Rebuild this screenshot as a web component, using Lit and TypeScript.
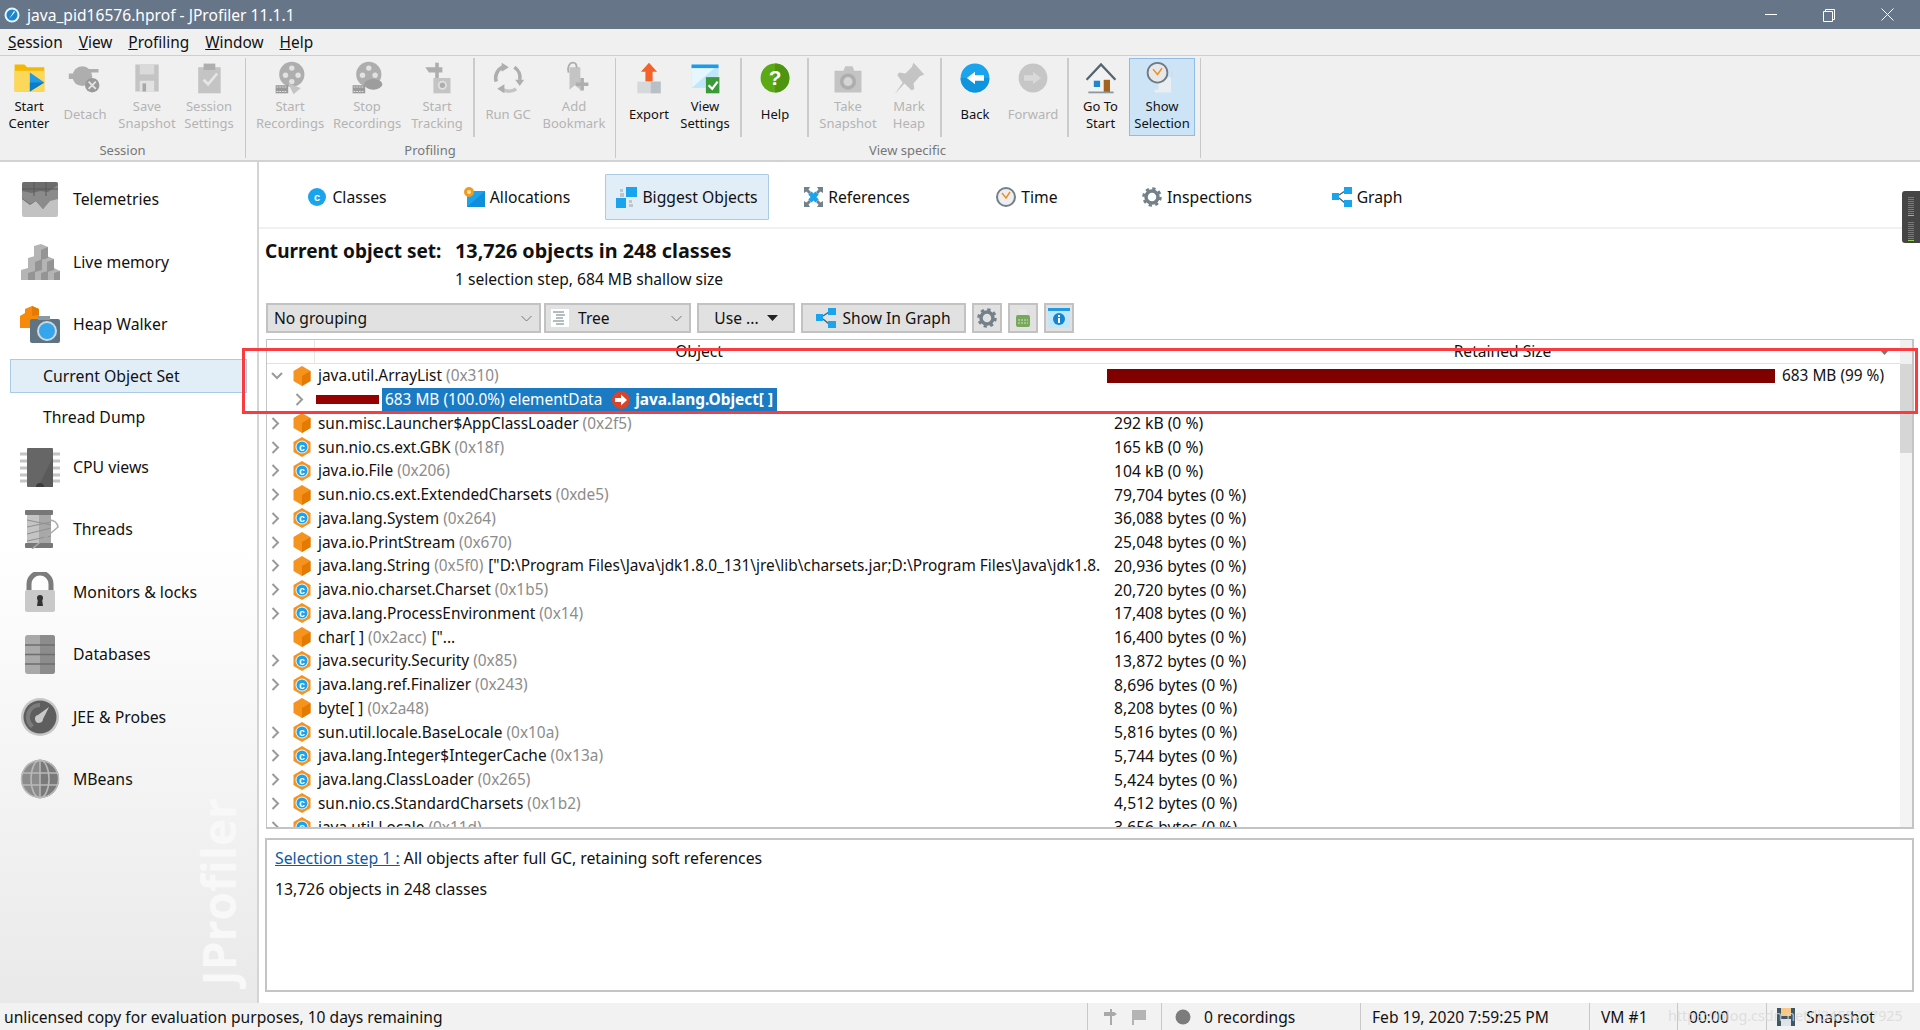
import { LitElement, html, css, svg } from 'lit';
import { customElement } from 'lit/decorators.js';

// Toolbar icons, all on a 40x40 box
const G1 = '#c4c4c4';
const G2 = '#aeaeae';
const toolIcons: Record<string, unknown> = {
  start: svg`<path d="M4 5h11l3 3h19v27H4z" fill="#f5b800"/><path d="M4 12h33v23H4z" fill="#fbd75a"/><path d="M21 14l16 11-16 10z" fill="#1f9ae8"/><path d="M21 25h16l-16 10z" fill="#0d7cc6"/>`,
  detach: svg`<circle cx="17" cy="18" r="11" fill="${G2}"/><path d="M2 15h6v6H2zM24 10h11v4H24zM24 21h6v4h-6z" fill="${G2}"/><circle cx="28" cy="28" r="8" fill="#9a9a9a"/><path d="M24 24l8 8M32 24l-8 8" stroke="#e4e4e4" stroke-width="2"/>`,
  save: svg`<path d="M7 5h26v30H7z" fill="${G1}"/><path d="M12 5h16v11H12z" fill="#dadada"/><path d="M12 23h16v12H12z" fill="#e2e2e2"/><path d="M15 26h4v9h-4z" fill="#a8a8a8"/>`,
  settings: svg`<path d="M8 8h25v29H8z" fill="${G1}"/><path d="M14 4h13v7H14z" fill="${G2}"/><path d="M14 22l5 5 10-12" stroke="#e6e6e6" stroke-width="3" fill="none"/>`,
  startRec: svg`<circle cx="22" cy="16" r="14" fill="${G2}"/><circle cx="22" cy="9" r="3" fill="#e2e2e2"/><circle cx="15" cy="17" r="3" fill="#e2e2e2"/><circle cx="29" cy="17" r="3" fill="#e2e2e2"/><circle cx="22" cy="24" r="3" fill="#e2e2e2"/><path d="M4 28h14v9H4z" fill="#9a9a9a"/><path d="M5 30h12M5 35h12" stroke="#e6e6e6" stroke-dasharray="2 1"/><path d="M18 26l14 5-8 7z" fill="${G1}"/>`,
  stopRec: svg`<circle cx="22" cy="16" r="14" fill="${G2}"/><circle cx="22" cy="9" r="3" fill="#e2e2e2"/><circle cx="15" cy="17" r="3" fill="#e2e2e2"/><circle cx="29" cy="17" r="3" fill="#e2e2e2"/><path d="M4 28h14v9H4z" fill="#9a9a9a"/><path d="M5 30h12M5 35h12" stroke="#e6e6e6" stroke-dasharray="2 1"/><ellipse cx="27" cy="27" rx="10" ry="6" fill="#9d9d9d"/>`,
  tracking: svg`<path d="M18 3h4v20h-4z" fill="${G2}"/><path d="M7 8h19v6H11z" fill="${G2}"/><path d="M16 20h19v17H16z" fill="${G1}"/><circle cx="26" cy="28" r="5" fill="#e0e0e0"/><circle cx="26" cy="28" r="3" fill="${G2}"/>`,
  gc: svg`<path d="M27 8a13 13 0 0 1 6 14" stroke="${G2}" stroke-width="4" fill="none"/><path d="M29 32a13 13 0 0 1-16 0" stroke="${G1}" stroke-width="4" fill="none"/><path d="M7 24a13 13 0 0 1 7-16" stroke="${G2}" stroke-width="4" fill="none"/><path d="M13 3l8 5-8 5z" fill="${G2}"/><path d="M28 22h10l-5 7zM16 37l-8-5 8-5z" fill="${G2}"/>`,
  bookmark: svg`<path d="M15 10h12v25l-6-5-6 5z" fill="${G1}" transform="translate(0 -2)"/><path d="M14 14C12 8 15 3 19 3c3 0 4 3 4 6" stroke="${G2}" stroke-width="2" fill="none"/><path d="M26 27h5v-5h4v5h5v4h-5v5h-4v-5h-5z" fill="${G2}" transform="translate(-4 -2)"/>`,
  exportUp: svg`<path d="M20 3l9 10h-5v11h-8V13h-5z" fill="#f4622a"/><path d="M7 24h26v13H7z" fill="#d5d9dc"/><path d="M22 24h11v13H22z" fill="#b8c0c6"/>`,
  viewSettings: svg`<path d="M5 5h30v26H5z" fill="#bfe6fb"/><path d="M5 5h30l-30 26z" fill="#e7f6fd"/><path d="M5 5h30v4H5z" fill="#1f9ae8"/><path d="M21 19h15v18H21z" fill="#3a9a3a"/><path d="M24 28l4 4 6-8" stroke="#fff" stroke-width="2.5" fill="none"/>`,
  help: svg`<circle cx="20" cy="20" r="16" fill="#5aa915"/><path d="M20 4a16 16 0 0 1 0 32z" fill="#4d9410"/><text x="20" y="28" font-family="Liberation Sans" font-weight="700" font-size="23" text-anchor="middle" fill="#fff">?</text>`,
  camera: svg`<path d="M5 12h10l2-5h8l2 5h8v24H5z" fill="${G1}"/><circle cx="20" cy="24" r="9" fill="${G2}"/><circle cx="20" cy="24" r="5" fill="#d5d5d5"/>`,
  pin: svg`<path d="M25 3l12 13-5 2-7 8 1 6-3 2-8-8-11 12 9-13-6-8 2-3 7 1 7-7z" fill="${G1}"/>`,
  back: svg`<circle cx="20" cy="20" r="16" fill="#1ba4ee"/><path d="M4 20a16 16 0 0 0 32 0z" fill="#0f94dd"/><path d="M11 20l9-7v4h10v6H20v4z" fill="#fff"/>`,
  forward: svg`<circle cx="20" cy="20" r="16" fill="#c6c6c6"/><path d="M29 20l-9-7v4H10v6h10v4z" fill="#d9d9d9"/>`,
  house: svg`<path d="M9 20L20 8l11 12v16H9z" fill="#f2f2f2"/><path d="M4 22L20 5l16 17" stroke="#56646e" stroke-width="2.5" fill="none"/><path d="M12 23h7v7h-7z" fill="#1f86d4"/><path d="M23 22h7v14h-7z" fill="#a5611f"/><path d="M6 35h28v2H6z" fill="#8b979f"/>`,
  showSel: svg`<path d="M16 18h14v17H12v-3h4z" fill="#e8eef2"/><circle cx="15" cy="13" r="11" fill="#e8e8e8" stroke="#6f7a82" stroke-width="2"/><path d="M10 9l5 6 5-7" stroke="#f28c1e" stroke-width="1.6" fill="none"/><path d="M30 12l2 1v5h-2z" fill="#d4dde4"/>`,
};

// Sidebar icons, all on a 40x40 box
const navIcons: Record<string, unknown> = {
  telemetries: svg`<rect x="2" y="3" width="36" height="35" rx="2" fill="#c2c2c2"/><path d="M2 5a2 2 0 0 1 2-2h32a2 2 0 0 1 2 2v14l-8 2-7 9-7-8-6 4-8-6z" fill="#6d6d6d"/><path d="M2 12l10 2 8-2 8 1 10-7v14l-8 2-7 8-7-8-6 3-8-6z" fill="#8b8b8b"/><path d="M2 10h36M14 3v14M26 3v14" stroke="#5a5a5a" stroke-width="1"/>`,
  memory: svg`<g fill="#b4b4b4"><path d="M14 4l7-2 7 3v11l-7 2-7-3z"/><path d="M8 16l7-2 7 3v11l-7 2-7-3z"/><path d="M20 16l7-2 7 3v11l-7 2-7-3z"/><path d="M1 28l7-2 7 3v9H1z"/><path d="M14 28l7-2 7 3v9H14z"/><path d="M27 28l7-2 6 3v9H27z"/></g><path d="M21 18V8l7-3v11zM15 30V20l7-3v11zM27 30V20l7-3v11zM8 38v-7l7-2v9zM21 38v-7l7-2v9zM34 38v-7l6-2v9z" fill="#949494"/>`,
  heap: svg`<path d="M12 2l7 3v7l7 3v9H0V12l5-3V5z" fill="#f58a0b"/><path d="M12 2v10l7-1V5z" fill="#e57a00"/><rect x="10" y="15" width="30" height="24" rx="2" fill="#5f7482"/><path d="M18 12h12v4H18z" fill="#8a9aa5"/><circle cx="27" cy="27" r="10" fill="#cfd8de"/><circle cx="27" cy="27" r="8" fill="#35a6ee"/>`,
  cpu: svg`<path d="M0 7h8M0 14h8M0 21h8M0 28h8M0 34h8M32 7h8M32 14h8M32 21h8M32 28h8M32 34h8" stroke="#c4c4c4" stroke-width="3"/><rect x="7" y="1" width="26" height="39" rx="1" fill="#666"/><path d="M33 1v39H18L33 10z" fill="#555" opacity=".7"/><circle cx="20" cy="40" r="4" fill="#3c3c3c"/>`,
  threads: svg`<rect x="5" y="1" width="28" height="5" rx="1" fill="#777"/><rect x="5" y="34" width="28" height="5" rx="1" fill="#777"/><rect x="7" y="6" width="24" height="28" fill="#c4c4c4"/><rect x="19" y="6" width="12" height="28" fill="#a8a8a8"/><path d="M7 11l24 5M7 18l24-5M7 25l24-6M7 32l24-5" stroke="#8f8f8f"/><path d="M12 40L38 18c-1-5-5-7-9-7" stroke="#aaa" stroke-width="1.5" fill="none"/>`,
  lock: svg`<path d="M9 20V12a11 11 0 0 1 22 0v8" stroke="#7c7c7c" stroke-width="5" fill="none"/><rect x="5" y="18" width="30" height="22" rx="2" fill="#c9c9c9"/><circle cx="20" cy="26" r="3" fill="#333"/><path d="M18 27h4l1 7h-6z" fill="#333"/>`,
  db: svg`<rect x="5" y="1" width="30" height="39" rx="3" fill="#a9a9a9"/><path d="M20 1h12a3 3 0 0 1 3 3v33a3 3 0 0 1-3 3H20z" fill="#8c8c8c"/><path d="M5 11h30M5 20.500h30M5 30h30" stroke="#6d6d6d" stroke-width="1.500"/>`,
  jee: svg`<circle cx="20" cy="20" r="19" fill="#c7c7c7"/><circle cx="20" cy="20" r="16.500" fill="#5e5e5e"/><path d="M20 6a14 14 0 0 0-14 14c0 5 2 9 5 11l3-3a10 10 0 0 1 6-18z" fill="#7c7c7c"/><path d="M29 10l-6 12a4 4 0 1 1-5-4z" fill="#c9c9c9"/>`,
  mbeans: svg`<circle cx="20" cy="20" r="19" fill="#8b8b8b"/><path d="M20 1a19 19 0 0 1 0 38z" fill="#7a7a7a"/><ellipse cx="20" cy="20" rx="9" ry="19" fill="none" stroke="#b9b9b9" stroke-width="1.500"/><path d="M20 1v38M2 14h36M2 26h36" stroke="#b9b9b9" stroke-width="1.500"/><circle cx="20" cy="20" r="18.500" fill="none" stroke="#b9b9b9" stroke-width="1.500"/>`,
};

const tabIcons: Record<string, unknown> = {
  classes: html`<svg width="20" height="20" viewBox="0 0 20 20"><circle cx="10" cy="10" r="9" fill="#1ba4ee"/><text x="10" y="14" font-family="Liberation Sans" font-weight="700" font-size="11" text-anchor="middle" fill="#fff">c</text></svg>`,
  alloc: html`<svg width="21" height="20" viewBox="0 0 21 20"><path d="M3 4h18v16H3z" fill="#1ba4ee"/><path d="M21 4v16H3z" fill="#0f8edb"/><circle cx="5" cy="5" r="5" fill="#f39a1e"/><circle cx="5" cy="5" r="2" fill="#fde4a8"/></svg>`,
  biggest: html`<svg width="21" height="21" viewBox="0 0 21 21"><path d="M0 11h10v10H0z" fill="#1ba4ee"/><path d="M10 0h11v10H10z" fill="#1ba4ee"/><path d="M4 2h3v3H4zM4 6h4v4H4zM13 13h3v3h-3zM13 17h4v3h-4z" fill="#bcc6cc"/></svg>`,
  refs: html`<svg width="19" height="20" viewBox="0 0 19 20"><path d="M6 6l7 8M13 6l-7 8" stroke="#1ba4ee" stroke-width="4.500"/><path d="M0 0h6L4.500 2.500 7 5 5 7 2.500 4.500 0 6zM19 0h-6l1.500 2.500L12 5l2 2 2.500-2.500L19 6zM0 20v-6l2.500 1.500L5 13l2 2-2.500 2.500L6 20zM19 20h-6l1.500-2.500L12 15l2-2 2.500 2.500L19 14z" fill="#72828d"/></svg>`,
  time: html`<svg width="20" height="20" viewBox="0 0 20 20"><circle cx="10" cy="10" r="9" fill="#eceeef" stroke="#738089" stroke-width="2"/><path d="M6 6l4 5 4-6" stroke="#f28c1e" stroke-width="1.400" fill="none"/></svg>`,
  gear: html`<svg width="20" height="20" viewBox="0 0 20 20"><circle cx="10" cy="10" r="6" fill="none" stroke="#738089" stroke-width="3.500"/><circle cx="10" cy="10" r="8.500" fill="none" stroke="#738089" stroke-width="2.500" stroke-dasharray="3.300 3.375"/></svg>`,
  graph: html`<svg width="20" height="20" viewBox="0 0 20 20"><path d="M7 8L13 4M7 11l6 5" stroke="#4f6270" stroke-width="1.500"/><path d="M0 6h7v7H0z" fill="#1ba4ee"/><path d="M12 0h8v7h-8z" fill="#1ba4ee"/><path d="M12 13h8v7h-8z" fill="#1ba4ee"/></svg>`,
};

const objectIcon = html`<svg class="node" width="18" height="20" viewBox="0 0 18 20"><path d="M9 0l8.500 5v10L9 20 .5 15V5z" fill="#f6921e"/><path d="M9 10l8.500-5v10L9 20z" fill="#e57a00"/></svg>`;
const classIcon = html`<svg class="node" width="18" height="20" viewBox="0 0 18 20"><path d="M9 0l8.500 5v10L9 20 .5 15V5z" fill="#f6921e"/><circle cx="9" cy="10" r="6.500" fill="#eaf6fd"/><circle cx="9" cy="10" r="5.500" fill="#1ba4ee"/><text x="9" y="13.500" font-family="Liberation Sans" font-weight="700" font-size="10.500" text-anchor="middle" fill="#fff">c</text></svg>`;
const chevronRight = html`<svg width="9" height="13" viewBox="0 0 9 13"><path d="M1.500 1l5.500 5.500L1.500 12" stroke="#9a9a9a" stroke-width="2" fill="none"/></svg>`;
const chevronDown = html`<svg width="12" height="8" viewBox="0 0 12 8"><path d="M1 1l5 5 5-5" stroke="#9a9a9a" stroke-width="2" fill="none"/></svg>`;
const comboArrow = html`<svg class="combo-arrow" width="11" height="7" viewBox="0 0 11 7"><path d="M.5 1l5 5 5-5" stroke="#777" stroke-width="1" fill="none"/></svg>`;

type Tool = { icon: string; lines: string[]; w: number; on?: boolean; active?: boolean; sep?: string };
const toolGroups: { label: string; cls: string; tools: Tool[] }[] = [
  {
    label: 'Session', cls: 'g1', tools: [
      { icon: 'start', lines: ['Start', 'Center'], w: 58, on: true },
      { icon: 'detach', lines: ['Detach'], w: 54 },
      { icon: 'save', lines: ['Save', 'Snapshot'], w: 70 },
      { icon: 'settings', lines: ['Session', 'Settings'], w: 54 },
    ],
  },
  {
    label: 'Profiling', cls: 'g2', tools: [
      { icon: 'startRec', lines: ['Start', 'Recordings'], w: 78 },
      { icon: 'stopRec', lines: ['Stop', 'Recordings'], w: 76 },
      { icon: 'tracking', lines: ['Start', 'Tracking'], w: 64, sep: 's1' },
      { icon: 'gc', lines: ['Run GC'], w: 62 },
      { icon: 'bookmark', lines: ['Add', 'Bookmark'], w: 70 },
    ],
  },
  {
    label: 'View specific', cls: 'g3', tools: [
      { icon: 'exportUp', lines: ['Export'], w: 56, on: true },
      { icon: 'viewSettings', lines: ['View', 'Settings'], w: 56, on: true, sep: 's2' },
      { icon: 'help', lines: ['Help'], w: 56, on: true, sep: 's3' },
      { icon: 'camera', lines: ['Take', 'Snapshot'], w: 66 },
      { icon: 'pin', lines: ['Mark', 'Heap'], w: 56, sep: 's4' },
      { icon: 'back', lines: ['Back'], w: 64, on: true },
      { icon: 'forward', lines: ['Forward'], w: 52, sep: 's5' },
      { icon: 'house', lines: ['Go To', 'Start'], w: 57, on: true },
      { icon: 'showSel', lines: ['Show', 'Selection'], w: 66, on: true, active: true },
    ],
  },
];

const navItems = [
  { icon: 'telemetries', label: 'Telemetries' },
  { icon: 'memory', label: 'Live memory' },
  { icon: 'heap', label: 'Heap Walker', subs: true },
  { icon: 'cpu', label: 'CPU views' },
  { icon: 'threads', label: 'Threads' },
  { icon: 'lock', label: 'Monitors & locks' },
  { icon: 'db', label: 'Databases' },
  { icon: 'jee', label: 'JEE & Probes' },
  { icon: 'mbeans', label: 'MBeans' },
];

const tabs = [
  { icon: 'classes', label: 'Classes' },
  { icon: 'alloc', label: 'Allocations' },
  { icon: 'biggest', label: 'Biggest Objects', active: true },
  { icon: 'refs', label: 'References' },
  { icon: 'time', label: 'Time' },
  { icon: 'gear', label: 'Inspections' },
  { icon: 'graph', label: 'Graph' },
];

// kind: o = plain object icon, c = class icon. leaf rows have no chevron.
const rows: { kind: string; name: string; addr: string; extra?: string; size: string; leaf?: boolean }[] = [
  { kind: 'o', name: 'sun.misc.Launcher$AppClassLoader', addr: '(0x2f5)', size: '292 kB (0 %)' },
  { kind: 'c', name: 'sun.nio.cs.ext.GBK', addr: '(0x18f)', size: '165 kB (0 %)' },
  { kind: 'c', name: 'java.io.File', addr: '(0x206)', size: '104 kB (0 %)' },
  { kind: 'o', name: 'sun.nio.cs.ext.ExtendedCharsets', addr: '(0xde5)', size: '79,704 bytes (0 %)' },
  { kind: 'c', name: 'java.lang.System', addr: '(0x264)', size: '36,088 bytes (0 %)' },
  { kind: 'o', name: 'java.io.PrintStream', addr: '(0x670)', size: '25,048 bytes (0 %)' },
  { kind: 'o', name: 'java.lang.String', addr: '(0x5f0)', extra: '["D:\\Program Files\\Java\\jdk1.8.0_131\\jre\\lib\\charsets.jar;D:\\Program Files\\Java\\jdk1.8.', size: '20,936 bytes (0 %)' },
  { kind: 'c', name: 'java.nio.charset.Charset', addr: '(0x1b5)', size: '20,720 bytes (0 %)' },
  { kind: 'c', name: 'java.lang.ProcessEnvironment', addr: '(0x14)', size: '17,408 bytes (0 %)' },
  { kind: 'o', name: 'char[ ]', addr: '(0x2acc)', extra: '["...', size: '16,400 bytes (0 %)', leaf: true },
  { kind: 'c', name: 'java.security.Security', addr: '(0x85)', size: '13,872 bytes (0 %)' },
  { kind: 'c', name: 'java.lang.ref.Finalizer', addr: '(0x243)', size: '8,696 bytes (0 %)' },
  { kind: 'o', name: 'byte[ ]', addr: '(0x2a48)', size: '8,208 bytes (0 %)', leaf: true },
  { kind: 'c', name: 'sun.util.locale.BaseLocale', addr: '(0x10a)', size: '5,816 bytes (0 %)' },
  { kind: 'c', name: 'java.lang.Integer$IntegerCache', addr: '(0x13a)', size: '5,744 bytes (0 %)' },
  { kind: 'c', name: 'java.lang.ClassLoader', addr: '(0x265)', size: '5,424 bytes (0 %)' },
  { kind: 'c', name: 'sun.nio.cs.StandardCharsets', addr: '(0x1b2)', size: '4,512 bytes (0 %)' },
  { kind: 'c', name: 'java.util.Locale', addr: '(0x11d)', size: '3,656 bytes (0 %)' },
];

@customElement('app-root')
export class AppRoot extends LitElement {
  static override styles = css`
    :host {
      display: flex;
      flex-direction: column;
      position: relative;
      width: 1920px;
      height: 1030px;
      overflow: hidden;
      background: #fff;
      color: #111;
      font-family: 'Noto Sans', 'Open Sans', sans-serif;
      font-size: 15.6px;
    }
    svg { display: block; flex: none; }

    /* title bar */
    .titlebar {
      height: 29px;
      flex: none;
      display: flex;
      align-items: center;
      background: #677589;
      color: #fff;
      padding-left: 4px;
      gap: 7px;
    }
    .win-btns { margin-left: auto; display: flex; gap: 46px; padding-right: 26px; }

    /* menu */
    .menubar {
      height: 27px;
      flex: none;
      box-sizing: border-box;
      display: flex;
      align-items: center;
      background: #f0f0f0;
      border-bottom: 1px solid #cfcfcf;
      padding-left: 8px;
      gap: 16px;
      font-size: 15.4px;
    }

    /* toolbar */
    .toolbar {
      height: 106px;
      flex: none;
      box-sizing: border-box;
      display: flex;
      background: #f0f0f0;
      border-bottom: 2px solid #d2d2d2;
      padding-top: 2px;
    }
    .group {
      height: 100px;
      box-sizing: border-box;
      display: flex;
      flex-direction: column;
      border-right: 1px solid #c8c8c8;
    }
    .group.g1 { width: 246px; }
    .group.g2 { width: 370px; padding-left: 5px; }
    .group.g3 { width: 585px; padding-left: 5px; }
    .tools { display: flex; height: 78px; }
    .group-label { margin-top: 6px; height: 16px; line-height: 16px; text-align: center; font-size: 13px; color: #777; }
    .g2 .group-label, .g3 .group-label { margin-left: -6px; }
    .tool {
      flex: none;
      box-sizing: border-box;
      display: flex;
      flex-direction: column;
      align-items: center;
      font-size: 13px;
      line-height: 17px;
      color: #b4b4b4;
    }
    .tool.on { color: #111; }
    .tool.active { background: #cde4f7; border: 1px solid #8fbce4; }
    .tool-icon { height: 40px; display: flex; align-items: center; justify-content: center; }
    .tool-label { height: 33px; display: flex; flex-direction: column; align-items: center; justify-content: center; white-space: nowrap; }
    .tool.active .tool-icon { height: 39px; }
    .sep { flex: none; width: 2px; height: 79px; background: #cbcbcb; }
    .sep.s1 { margin: 0 2px 0 4px; }
    .sep.s2 { margin: 0 5px 0 7px; }
    .sep.s3 { margin: 0 6px 0 4px; }
    .sep.s4 { margin: 0 1px 0 3px; }
    .sep.s5 { margin: 0 3px 0 8px; }

    /* main */
    .main { flex: 1; min-height: 0; display: flex; }
    .sidebar {
      position: relative;
      width: 259px;
      flex: none;
      box-sizing: border-box;
      border-right: 2px solid #d4d4d4;
      background: linear-gradient(#fff 0%, #fff 45%, #e9e9e9 100%);
      padding-top: 6px;
      font-size: 15.8px;
    }
    .nav-item { height: 62.500px; display: flex; align-items: center; padding-left: 20px; gap: 13px; color: #111; }
    .sub-items { display: flex; flex-direction: column; gap: 7px; margin: 3px 0 2px; }
    .sub-item { height: 34px; box-sizing: border-box; display: flex; align-items: center; margin-left: 10px; width: 237px; padding-left: 32px; border: 1px solid transparent; }
    .sub-item.active { background: #e1edf7; border-color: #a9cbe6; }
    .brand {
      position: absolute;
      left: 193px;
      bottom: 18px;
      writing-mode: vertical-rl;
      transform: rotate(180deg);
      font-family: 'Open Sans', sans-serif;
      font-weight: 700;
      font-size: 46px;
      line-height: 50px;
      color: #f8f8f8;
    }

    .content { flex: 1; min-width: 0; display: flex; flex-direction: column; padding: 0 6px 11px 6px; }
    .tabs { height: 67px; flex: none; box-sizing: border-box; display: flex; gap: 6px; padding-top: 12px; margin-right: -6px; margin-left: -6px; padding-left: 6px; border-bottom: 2px solid #f1f1f1; }
    .tab { width: 164px; height: 46px; box-sizing: border-box; display: flex; align-items: center; justify-content: center; gap: 5px; border: 1px solid transparent; font-size: 15.7px; }
    .tab.active { background: #e1edf7; border-color: #a9cbe6; border-radius: 1px; }

    .summary { display: grid; grid-template-columns: 190px auto; justify-content: start; margin-top: 8px; }
    .summary b { line-height: 28px; }
    .summary b.label { font-size: 19px; white-space: nowrap; }
    .summary b.value { font-size: 19.800px; white-space: nowrap; }
    .summary .sub { grid-column: 2; line-height: 28px; }

    .controls { display: flex; gap: 6px; height: 30px; margin: 10px 0 6px 1px; flex: none; }
    .ctl {
      box-sizing: border-box;
      height: 30px;
      display: flex;
      align-items: center;
      background: #e1e1e1;
      border: 2px solid #c2c2c2;
      white-space: nowrap;
    }
    .ctl.grouping { width: 275px; padding-left: 6px; margin-right: -3px; }
    .ctl.tree-mode { width: 147px; padding-left: 5px; }
    .tree-label { margin-left: 9px; }
    .combo-arrow { margin-left: auto; margin-right: 7px; }
    .ctl.use { width: 98px; justify-content: center; gap: 8px; }
    .ctl.in-graph { width: 165px; justify-content: center; gap: 6px; }
    .ctl.square { width: 30px; justify-content: center; }

    .table { flex: 1; min-height: 0; margin-left: 1px; display: flex; box-sizing: border-box; border: 1px solid #c4c4c4; border-width: 1px 2px 2px 1px; overflow: hidden; font-size: 15.4px; }
    .table-main { flex: 1; min-width: 0; display: flex; flex-direction: column; }
    .head { height: 24px; box-sizing: border-box; flex: none; display: flex; border-bottom: 1px solid #e2e2e2; line-height: 23px; position: relative; font-size: 15.6px; }
    .head-gutter { width: 47px; border-right: 1px solid #e6e6e6; }
    .head-obj { width: 790px; box-sizing: border-box; padding-right: 22px; text-align: center; }
    .head-size { flex: 1; text-align: center; }
    .sort-arrow { position: absolute; right: 10px; top: 9px; }
    .row { height: 23.750px; flex: none; display: flex; align-items: center; white-space: nowrap; }
    .name { width: 838px; flex: none; display: flex; align-items: center; overflow: hidden; }
    .chev { width: 26px; flex: none; padding-left: 4px; box-sizing: border-box; display: flex; }
    .node { margin-right: 7px; }
    .addr { color: #8c8c8c; margin-left: 4px; }
    .extra { margin-left: 5px; }
    .size { padding-left: 9px; font-size: 15.700px; }
    .row.first .size { padding-left: 2px; display: flex; align-items: center; gap: 7px; flex: 1; font-size: 15.400px; }
    .big-bar { width: 668px; height: 14px; background: #800000; }
    .row.child .name { padding-left: 28px; box-sizing: border-box; }
    .child-chev { width: 21px; flex: none; }
    .child-bar { width: 63px; height: 9px; background: #950000; margin-right: 3px; flex: none; }
    .picked { height: 23px; display: flex; align-items: center; background: #1a7bc4; color: #fff; padding: 0 4px 0 3px; }
    .picked b { font-weight: 700; }
    .picked svg { margin: 0 5px 0 10px; }

    .scroll { width: 12px; flex: none; display: flex; flex-direction: column; background: #f3f3f3; }
    .scroll-head { height: 24px; background: #f0f0f0; }
    .scroll-thumb { height: 89px; background: #d6d6d6; }

    .details { height: 154px; flex: none; box-sizing: border-box; margin-top: 9px; border: 2px solid #c4c4c4; padding: 3px 8px; line-height: 30.500px; font-size: 15.800px; }
    .details a { color: #0b5aa6; text-decoration: underline; }

    /* status bar */
    .statusbar { height: 27px; flex: none; display: flex; align-items: center; background: #f2f2f2; position: relative; white-space: nowrap; }
    .msg { flex: 1; padding-left: 4px; }
    .cell { height: 27px; box-sizing: border-box; display: flex; align-items: center; border-left: 1px solid #c8c8c8; }
    .cell.flags { width: 74px; padding-left: 15px; gap: 12px; }
    .cell.recs { width: 199px; padding-left: 13px; gap: 13px; }
    .cell.date { width: 229px; padding-left: 11px; }
    .cell.vm { width: 88px; padding-left: 11px; }
    .cell.clock { width: 89px; padding-left: 11px; }
    .cell.mode { width: 154px; padding-left: 10px; gap: 11px; }
    .watermark { position: absolute; left: 1668px; top: 3px; font-size: 14.300px; color: #dadada; opacity: .8; }

    /* overlays */
    .mini { position: absolute; left: 1902px; top: 191px; width: 18px; height: 52px; background: #454545; border-radius: 3px 0 0 3px; box-sizing: border-box; padding: 6px 0 0 6px; display: flex; flex-direction: column; gap: 1px; }
    .mini i { display: block; width: 6px; height: 1px; background: #7a7a7a; }
    .mini i.or { background: #f5a11e; }
    .mini i.gr { background: #8ed64a; }
    .mini i.gap { margin-top: 5px; }
    .redbox { position: absolute; left: 242px; top: 348px; width: 1676px; height: 66px; box-sizing: border-box; border: 3px solid #f93c3f; pointer-events: none; }
  `;

  private renderTool(t: Tool) {
    return html`
      <div class="tool ${t.on ? 'on' : ''} ${t.active ? 'active' : ''}" style="width:${t.w}px">
        <div class="tool-icon"><svg width="36" height="36" viewBox="0 0 40 40">${toolIcons[t.icon]}</svg></div>
        <div class="tool-label">${t.lines.map((l) => html`<span>${l}</span>`)}</div>
      </div>
      ${t.sep ? html`<div class="sep ${t.sep}"></div>` : ''}
    `;
  }

  private renderNav(n: (typeof navItems)[number]) {
    return html`
      <div class="nav-item">
        <svg width="40" height="40" viewBox="0 0 40 40">${navIcons[n.icon]}</svg>
        <span>${n.label}</span>
      </div>
      ${n.subs
        ? html`<div class="sub-items">
            <div class="sub-item active">Current Object Set</div>
            <div class="sub-item">Thread Dump</div>
          </div>`
        : ''}
    `;
  }

  private renderRow(r: (typeof rows)[number]) {
    return html`
      <div class="row">
        <div class="name">
          <span class="chev">${r.leaf ? '' : chevronRight}</span>
          ${r.kind === 'c' ? classIcon : objectIcon}
          <span>${r.name}</span><span class="addr">${r.addr}</span>
          ${r.extra ? html`<span class="extra">${r.extra}</span>` : ''}
        </div>
        <div class="size">${r.size}</div>
      </div>
    `;
  }

  override render() {
    const meterA = Array.from({ length: 9 });
    return html`
      <div class="titlebar">
        <svg width="16" height="16" viewBox="0 0 16 16"><circle cx="8" cy="8" r="7.500" fill="#e8f4fc"/><circle cx="8" cy="8" r="5.500" fill="#1a86d0"/><path d="M5 12l5-8 1 1z" fill="#fff"/></svg>
        <span>java_pid16576.hprof - JProfiler 11.1.1</span>
        <div class="win-btns">
          <svg width="12" height="12" viewBox="0 0 12 12"><path d="M0 6.500h12" stroke="#fff"/></svg>
          <svg width="12" height="14" viewBox="0 0 12 14"><path d="M.5 3.500h9v10h-9zM2.500 3.500v-2h9v10h-2" stroke="#fff" fill="none"/></svg>
          <svg width="13" height="13" viewBox="0 0 13 13"><path d="M.5.5l12 12M12.500.5l-12 12" stroke="#fff"/></svg>
        </div>
      </div>

      <div class="menubar">
        <span><u>S</u>ession</span>
        <span><u>V</u>iew</span>
        <span><u>P</u>rofiling</span>
        <span><u>W</u>indow</span>
        <span><u>H</u>elp</span>
      </div>

      <div class="toolbar">
        ${toolGroups.map(
          (g) => html`
            <div class="group ${g.cls}">
              <div class="tools">${g.tools.map((t) => this.renderTool(t))}</div>
              <div class="group-label">${g.label}</div>
            </div>
          `
        )}
      </div>

      <div class="main">
        <div class="sidebar">
          ${navItems.map((n) => this.renderNav(n))}
          <div class="brand">JProfiler</div>
        </div>

        <div class="content">
          <div class="tabs">
            ${tabs.map(
              (t) => html`<div class="tab ${t.active ? 'active' : ''}">${tabIcons[t.icon]}<span>${t.label}</span></div>`
            )}
          </div>

          <div class="summary">
            <b class="label">Current object set:</b><b class="value">13,726 objects in 248 classes</b>
            <div class="sub">1 selection step, 684 MB shallow size</div>
          </div>

          <div class="controls">
            <div class="ctl grouping"><span>No grouping</span>${comboArrow}</div>
            <div class="ctl tree-mode">
              <svg width="18" height="18" viewBox="0 0 18 18"><path d="M0 0h18v18H0z" fill="#fff"/><path d="M2 3h11M5 6h9M5 9h7M2 12h11M5 15h8" stroke="#6b7a85"/></svg>
              <span class="tree-label">Tree</span>${comboArrow}
            </div>
            <div class="ctl use">
              <span>Use ...</span>
              <svg width="11" height="6" viewBox="0 0 11 6"><path d="M0 0h11L5.500 6z" fill="#222"/></svg>
            </div>
            <div class="ctl in-graph">${tabIcons.graph}<span>Show In Graph</span></div>
            <div class="ctl square">${tabIcons.gear}</div>
            <div class="ctl square">
              <svg width="18" height="20" viewBox="0 0 18 20"><path d="M5 1h8v6H5z" fill="#e6e6e6"/><rect x="2" y="7" width="14" height="12" rx="2" fill="#79a85c"/><path d="M4 12h10M4 15h10" stroke="#cfe3c2" stroke-dasharray="2 1"/></svg>
            </div>
            <div class="ctl square">
              <svg width="22" height="20" viewBox="0 0 22 20"><path d="M0 0h22v20H0z" fill="#bfe6fb"/><path d="M0 0h22v3H0z" fill="#1f9ae8"/><circle cx="11" cy="11" r="6" fill="#1583d2"/><path d="M10 7h2v2h-2zM10 10h2v5h-2z" fill="#fff"/></svg>
            </div>
          </div>

          <div class="table">
            <div class="table-main">
              <div class="head">
                <div class="head-gutter"></div>
                <div class="head-obj">Object</div>
                <div class="head-size">Retained Size</div>
                <svg class="sort-arrow" width="11" height="6" viewBox="0 0 11 6"><path d="M0 0h11L5.500 6z" fill="#777"/></svg>
              </div>
              <div class="row first">
                <div class="name">
                  <span class="chev">${chevronDown}</span>
                  ${objectIcon}
                  <span>java.util.ArrayList</span><span class="addr">(0x310)</span>
                </div>
                <div class="size"><div class="big-bar"></div><span>683 MB (99 %)</span></div>
              </div>
              <div class="row child">
                <div class="name">
                  <span class="child-chev">${chevronRight}</span>
                  <div class="child-bar"></div>
                  <div class="picked">
                    <span>683 MB (100.0%) elementData</span>
                    <svg width="18" height="18" viewBox="0 0 18 18"><circle cx="9" cy="9" r="9" fill="#d8432a"/><path d="M3 7h6V3.500L15 9l-6 5.500V11H3z" fill="#fff"/></svg>
                    <b>java.lang.Object[ ]</b>
                  </div>
                </div>
              </div>
              ${rows.map((r) => this.renderRow(r))}
            </div>
            <div class="scroll">
              <div class="scroll-head"></div>
              <div class="scroll-thumb"></div>
            </div>
          </div>

          <div class="details">
            <div><a>Selection step 1 :</a> All objects after full GC, retaining soft references</div>
            <div>13,726 objects in 248 classes</div>
          </div>
        </div>
      </div>

      <div class="statusbar">
        <div class="msg">unlicensed copy for evaluation purposes, 10 days remaining</div>
        <div class="cell flags">
          <svg width="16" height="16" viewBox="0 0 16 16"><path d="M7 0h2v16H7zM1 3h10l3 2-3 2H1z" fill="#a9a9a9"/></svg>
          <svg width="16" height="16" viewBox="0 0 16 16"><path d="M1 1h2v15H1zM3 1h12v10H3z" fill="#b4b4b4"/></svg>
        </div>
        <div class="cell recs">
          <svg width="16" height="16" viewBox="0 0 16 16"><circle cx="8" cy="8" r="7.500" fill="#7c7c7c"/></svg>
          <span>0 recordings</span>
        </div>
        <div class="cell date">Feb 19, 2020 7:59:25 PM</div>
        <div class="cell vm">VM #1</div>
        <div class="cell clock">00:00</div>
        <div class="cell mode">
          <svg width="18" height="18" viewBox="0 0 18 18"><path d="M0 0h18v18H0z" fill="#3f5868"/><path d="M4 0h10v8H4z" fill="#f7c887"/><path d="M4 11h10v7H4z" fill="#dfe4e8"/></svg>
          <span>Snapshot</span>
        </div>
        <div class="watermark">https://blog.csdn.net/ll3455277925</div>
      </div>

      <div class="mini">
        ${meterA.map(() => html`<i></i>`)}<i class="or"></i>
        ${meterA.map((_, k) => html`<i class="${k === 0 ? 'gap' : ''}"></i>`)}<i class="gr"></i>
      </div>
      <div class="redbox"></div>
    `;
  }
}
